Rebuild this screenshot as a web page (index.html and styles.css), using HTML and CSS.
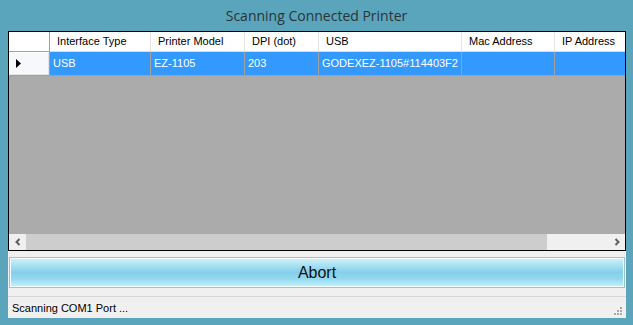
FILE: index.html
```html
<!DOCTYPE html>
<html>
<head>
  <title>Scanning Connected Printer</title>
  <link rel="stylesheet" href="styles.css">
</head>
<body>
  <div class="window">
    <div class="title">Scanning Connected Printer</div>
    <div class="client">
      <div class="grid">
        <div class="rows">
          <div class="row head">
            <div class="cell corner"></div>
            <div class="cell">Interface Type</div>
            <div class="cell">Printer Model</div>
            <div class="cell">DPI (dot)</div>
            <div class="cell">USB</div>
            <div class="cell">Mac Address</div>
            <div class="cell last">IP Address</div>
          </div>
          <div class="row data selected">
            <div class="cell rowhead">
              <svg width="6" height="9" viewBox="0 0 6 9"><path d="M0 0 L5 4.5 L0 9 Z" fill="#000"/></svg>
            </div>
            <div class="cell">USB</div>
            <div class="cell">EZ-1105</div>
            <div class="cell">203</div>
            <div class="cell">GODEXEZ-1105#114403F2</div>
            <div class="cell"></div>
            <div class="cell last"></div>
          </div>
        </div>
        <div class="workspace"></div>
        <div class="hscroll">
          <div class="arrow">
            <svg width="8" height="8" viewBox="0 0 8 8"><path d="M5.5 1 L2.5 4 L5.5 7" fill="none" stroke="#606060" stroke-width="2"/></svg>
          </div>
          <div class="thumb"></div>
          <div class="track"></div>
          <div class="arrow">
            <svg width="8" height="8" viewBox="0 0 8 8"><path d="M2.5 1 L5.5 4 L2.5 7" fill="none" stroke="#606060" stroke-width="2"/></svg>
          </div>
        </div>
      </div>

      <button class="abort">Abort</button>

      <div class="status">
        <span>Scanning COM1 Port ...</span>
        <svg class="grip" width="10" height="10" viewBox="0 0 10 10">
          <rect x="7" y="1" width="2" height="2" fill="#a8a8a8"/>
          <rect x="4" y="4" width="2" height="2" fill="#a8a8a8"/>
          <rect x="7" y="4" width="2" height="2" fill="#a8a8a8"/>
          <rect x="1" y="7" width="2" height="2" fill="#a8a8a8"/>
          <rect x="4" y="7" width="2" height="2" fill="#a8a8a8"/>
          <rect x="7" y="7" width="2" height="2" fill="#a8a8a8"/>
        </svg>
      </div>
    </div>
  </div>
</body>
</html>
```

FILE: styles.css
```css
html, body {
  margin: 0;
  padding: 0;
}

body {
  background-color: #5aa4bc;
  font-family: "Liberation Sans", Arial, sans-serif;
  font-size: 11px;
  color: #000;
}

.window {
  width: 633px;
  height: 325px;
}

.title {
  height: 31px;
  line-height: 31px;
  text-align: center;
  font-family: "Open Sans", sans-serif;
  font-size: 14px;
  color: #2a3438;
}

.client {
  margin: 0 7px 0 8px;
  width: 618px;
  height: 287px;
  background-color: #f0f0f0;
  display: flex;
  flex-direction: column;
}

/* data grid */
.grid {
  height: 220px;
  box-sizing: border-box;
  border: 1px solid #000;
  background-color: #ababab;
  display: flex;
  flex-direction: column;
}

.row {
  display: grid;
  grid-template-columns: 41px 101px 94px 74px 143px 93px 1fr;
}

.cell {
  box-sizing: border-box;
  border-right: 1px solid #e5e5e5;
  white-space: nowrap;
  overflow: hidden;
}

.cell.last {
  border-right: none;
}

.head {
  height: 20px;
  background-color: #fff;
}

.head .cell {
  padding-left: 7px;
  line-height: 19px;
  border-bottom: 1px solid #dcdcdc;
}

.head .corner {
  border-right-color: #a0a0a0;
  border-bottom-color: #a0a0a0;
}

.data {
  height: 24px;
}

.data .cell {
  padding-left: 3px;
  line-height: 23px;
  border-right-color: #a0a0a0;
  border-bottom: 1px solid #a0a0a0;
}

.selected {
  background-color: #3399ff;
  color: #fff;
}

.data .rowhead {
  background-color: #f7f8fb;
  box-shadow: inset 1px 1px 0 #fff, inset -1px -1px 0 #e3e3e3;
  padding-left: 7px;
  display: flex;
  align-items: center;
}

.workspace {
  flex: 1;
}

.hscroll {
  height: 16px;
  display: flex;
  background-color: #f0f0f0;
}

.hscroll .arrow {
  width: 17px;
  display: flex;
  align-items: center;
  justify-content: center;
}

.hscroll .thumb {
  width: 521px;
  background-color: #cdcdcd;
}

.hscroll .track {
  flex: 1;
}

/* abort button */
.abort {
  margin: 6px 1px 0 1px;
  height: 31px;
  box-sizing: border-box;
  border: 1px solid #9ec2d4;
  box-shadow: inset 0 0 0 1px #f4fcff;
  background: linear-gradient(#d3f1fb 0%, #a9e1f4 25%, #86cfea 50%, #94d8ef 72%, #c2f4fc 100%);
  font-family: "Liberation Sans", Arial, sans-serif;
  font-size: 16px;
  color: #111;
  padding: 0;
}

/* status bar */
.status {
  margin-top: 8px;
  border-top: 1px solid #d7d7d7;
  height: 21px;
  display: flex;
  align-items: center;
  justify-content: space-between;
  padding: 0 3px 0 4px;
}

.grip {
  align-self: flex-end;
  margin-bottom: 2px;
}
```
